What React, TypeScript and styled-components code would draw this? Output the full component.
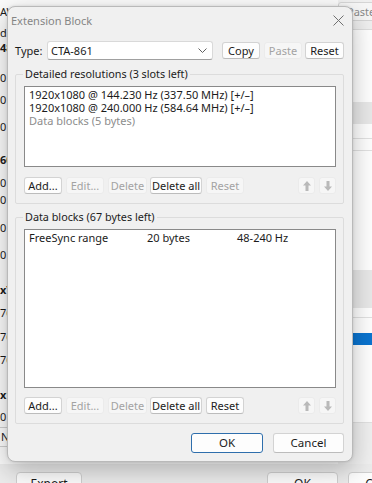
import React from 'react';
import styled, { createGlobalStyle } from 'styled-components';

const GlobalStyle = createGlobalStyle`
  html, body {
    margin: 0;
    padding: 0;
  }
  body {
    width: 372px;
    height: 483px;
    overflow: hidden;
    background: #f0f0f0;
    font-family: "Noto Sans", "Segoe UI", sans-serif;
    font-size: 11px;
    color: #1b1b1b;
  }
  * {
    box-sizing: border-box;
  }
`;

/* ---------- window behind the dialog ---------- */

const Desktop = styled.div`
  position: relative;
  width: 372px;
  height: 483px;
  display: grid;
  grid-template-rows: 464px 1fr;
  overflow: hidden;
`;

const BackMain = styled.div`
  display: grid;
  grid-template-columns: 338px 1fr;
`;

const BackList = styled.div`
  background: #fbfbfb;
  display: flex;
  flex-direction: column;
`;

const BackRow = styled.div<{ $gap: number; $bold?: boolean }>`
  margin-top: ${p => p.$gap}px;
  height: 14px;
  line-height: 14px;
  font-weight: ${p => (p.$bold ? 700 : 400)};
  white-space: nowrap;
`;

const BackSmallButton = styled.div`
  margin-top: 3px;
  width: 40px;
  height: 20px;
  line-height: 18px;
  border: 1px solid #cfcfcf;
  border-radius: 3px;
  background: #fdfdfd;
  margin-left: -20px;
  padding-left: 20px;
`;

const BackSide = styled.div`
  display: flex;
  flex-direction: column;
`;

const SideToolbar = styled.div`
  height: 30px;
  padding-top: 2px;
  background: #f0f0f0;
  border-bottom: 1px solid #dedede;
`;

const SideButton = styled.div`
  height: 19px;
  line-height: 17px;
  width: 60px;
  padding-left: 8px;
  border: 1px solid #d6d6d6;
  border-radius: 3px;
  background: #f7f7f7;
  color: #8a8a8a;
`;

const SideBand = styled.div<{ $h: number; $bg: string; $line?: boolean }>`
  height: ${p => p.$h}px;
  background: ${p => p.$bg};
  border-bottom: ${p => (p.$line ? '1px solid #e2e2e2' : 'none')};
`;

const BackBar = styled.div`
  background: #ececec;
  display: flex;
  align-items: flex-start;
  padding-top: 8px;
  padding-left: 16px;
`;

const BarButton = styled.div<{ $w: number; $ml: number }>`
  width: ${p => p.$w}px;
  margin-left: ${p => p.$ml}px;
  height: 24px;
  border: 1px solid #d0d0d0;
  border-radius: 4px;
  background: #fdfdfd;
  text-align: center;
  line-height: 22px;
  font-size: 12px;
`;

/* ---------- the dialog ---------- */

const Dialog = styled.div`
  position: absolute;
  left: 7px;
  top: 6px;
  width: 346px;
  height: 456px;
  background: #f0f0f0;
  border: 1px solid #b9b9b9;
  border-radius: 8px;
  box-shadow: 0 8px 26px rgba(0, 0, 0, 0.26), 0 0 3px rgba(0, 0, 0, 0.12);
  display: flex;
  flex-direction: column;
  overflow: hidden;
`;

const TitleBar = styled.div`
  height: 27px;
  display: flex;
  align-items: center;
  justify-content: space-between;
  padding-left: 3px;
`;

const Title = styled.span`
  font-size: 11px;
  color: #858585;
`;

const CloseButton = styled.div`
  width: 28px;
  height: 27px;
  display: flex;
  align-items: center;
  justify-content: center;
`;

const Body = styled.div`
  flex: 1;
  display: flex;
  flex-direction: column;
  padding: 7px 8px 8px 7px;
`;

const TypeRow = styled.div`
  height: 19px;
  display: flex;
  align-items: center;
`;

const TypeLabel = styled.span`
  width: 32px;
`;

const Select = styled.div`
  width: 166px;
  height: 19px;
  margin-right: 9px;
  display: flex;
  align-items: center;
  justify-content: space-between;
  padding: 0 5px 0 3px;
  background: #fff;
  border: 1px solid #d9d9d9;
  border-bottom-color: #a0a0a0;
  border-radius: 3px;
`;

const Btn = styled.button<{ $w: number; $h?: number; $default?: boolean }>`
  width: ${p => p.$w}px;
  height: ${p => p.$h ?? 17}px;
  padding: 0;
  font-family: inherit;
  font-size: ${p => (p.$h ? 11.5 : 11)}px;
  line-height: 1;
  color: #1b1b1b;
  background: #fdfdfd;
  border: 1px solid ${p => (p.$default ? '#2e6eac' : '#d3d3d3')};
  border-bottom-color: ${p => (p.$default ? '#2e6eac' : '#bcbcbc')};
  border-radius: 3px;
  display: inline-flex;
  align-items: center;
  justify-content: center;

  &:disabled {
    color: #a3a3a3;
    background: #f6f6f6;
    border-color: #ebebeb;
  }
`;

const ButtonGroup = styled.div<{ $gap: number }>`
  display: flex;
  gap: ${p => p.$gap}px;
`;

const Group = styled.fieldset<{ $mt: number }>`
  margin: ${p => p.$mt}px 0 0 0;
  padding: 5px 7px 9px 8px;
  border: 1px solid #dcdcdc;
  border-radius: 2px;
  min-width: 0;
`;

const Legend = styled.legend`
  margin-left: -1px;
  padding: 0 2px;
  line-height: 14px;
  height: 14px;
  font-size: 10.8px;
`;

const ListBox = styled.div<{ $h: number }>`
  height: ${p => p.$h}px;
  background: #fff;
  border: 1px solid #898989;
  padding: 1px 4px 0 4px;
`;

const ListLine = styled.div<{ $muted?: boolean }>`
  height: 13px;
  line-height: 13px;
  white-space: nowrap;
  color: ${p => (p.$muted ? '#8d8d8d' : '#1b1b1b')};
`;

const BlockLine = styled.div`
  height: 13px;
  line-height: 13px;
  display: grid;
  grid-template-columns: 118px 90px 1fr;
  white-space: nowrap;
`;

const ActionRow = styled.div<{ $mt: number }>`
  margin-top: ${p => p.$mt}px;
  display: flex;
  justify-content: space-between;
`;

const Footer = styled.div`
  margin-top: 9px;
  display: flex;
  justify-content: flex-end;
  gap: 10px;
`;

const Chevron = () => (
  <svg width="9" height="5" viewBox="0 0 9 5">
    <path d="M0.5 0.5 L4.5 4.5 L8.5 0.5" fill="none" stroke="#606060" strokeWidth="1" />
  </svg>
);

const CloseIcon = () => (
  <svg width="11" height="11" viewBox="0 0 11 11">
    <path d="M0.5 0.5 L10.5 10.5 M10.5 0.5 L0.5 10.5" stroke="#707070" strokeWidth="1" />
  </svg>
);

const Arrow: React.FC<{ down?: boolean }> = ({ down }) => (
  <svg width="8" height="10" viewBox="0 0 8 10" style={down ? { transform: 'rotate(180deg)' } : undefined}>
    <path d="M4 0 L8 4.5 H5.5 V10 H2.5 V4.5 H0 Z" fill="#b9b9b9" />
  </svg>
);

const Actions: React.FC<{ editable: boolean; mt: number }> = ({ editable, mt }) => (
  <ActionRow $mt={mt}>
    <ButtonGroup $gap={4}>
      <Btn $w={38}>Add...</Btn>
      <Btn $w={38} disabled>
        Edit...
      </Btn>
      <Btn $w={39} disabled>
        Delete
      </Btn>
      <Btn $w={52} style={{ marginLeft: -1 }}>
        Delete all
      </Btn>
      <Btn $w={38} disabled={!editable}>
        Reset
      </Btn>
    </ButtonGroup>
    <ButtonGroup $gap={4}>
      <Btn $w={17} disabled>
        <Arrow />
      </Btn>
      <Btn $w={17} disabled>
        <Arrow down />
      </Btn>
    </ButtonGroup>
  </ActionRow>
);

const backRows: { text: string; gap: number; bold?: boolean }[] = [
  { text: 'AW', gap: 5 },
  { text: 'd', gap: 7 },
  { text: '48', gap: 1, bold: true },
  { text: '0', gap: 16 },
  { text: '0', gap: 8 },
  { text: '0', gap: 13 },
  { text: '60', gap: 19, bold: true },
  { text: '0', gap: 9 },
  { text: '0', gap: 3 },
  { text: '0', gap: 14 },
  { text: '0', gap: 13 },
  { text: 'x7', gap: 21, bold: true },
  { text: '76', gap: 9 },
  { text: '76', gap: 10 },
  { text: '76', gap: 9 },
  { text: 'x1', gap: 21, bold: true },
  { text: '0', gap: 8 },
];

const sideBands: { h: number; bg: string; line?: boolean }[] = [
  { h: 72, bg: '#ffffff' },
  { h: 22, bg: '#e9e9e9' },
  { h: 15, bg: '#ffffff', line: true },
  { h: 12, bg: '#ffffff', line: true },
  { h: 119, bg: '#ffffff' },
  { h: 38, bg: '#e9e9e9' },
  { h: 10, bg: '#ffffff', line: true },
  { h: 15, bg: '#ffffff' },
  { h: 12, bg: '#0a74d0' },
  { h: 78, bg: '#ffffff', line: true },
  { h: 40, bg: '#f0f0f0' },
];

const App: React.FC = () => {
  return (
    <>
      <GlobalStyle />
      <Desktop>
        <BackMain>
          <BackList>
            {backRows.map((r, i) => (
              <BackRow key={i} $gap={r.gap} $bold={r.bold}>
                {r.text}
              </BackRow>
            ))}
            <BackSmallButton>N</BackSmallButton>
          </BackList>
          <BackSide>
            <SideToolbar>
              <SideButton>Paste</SideButton>
            </SideToolbar>
            {sideBands.map((b, i) => (
              <SideBand key={i} $h={b.h} $bg={b.bg} $line={b.line} />
            ))}
          </BackSide>
        </BackMain>
        <BackBar>
          <BarButton $w={66} $ml={0}>
            Export
          </BarButton>
          <BarButton $w={71} $ml={185}>
            OK
          </BarButton>
          <BarButton $w={72} $ml={10}>
            Cancel
          </BarButton>
        </BackBar>

        <Dialog>
          <TitleBar>
            <Title>Extension Block</Title>
            <CloseButton>
              <CloseIcon />
            </CloseButton>
          </TitleBar>
          <Body>
            <TypeRow>
              <TypeLabel>Type:</TypeLabel>
              <Select>
                <span>CTA-861</span>
                <Chevron />
              </Select>
              <ButtonGroup $gap={4}>
                <Btn $w={38}>Copy</Btn>
                <Btn $w={38} disabled>
                  Paste
                </Btn>
                <Btn $w={39} style={{ marginLeft: -1 }}>
                  Reset
                </Btn>
              </ButtonGroup>
            </TypeRow>

            <Group $mt={7}>
              <Legend>Detailed resolutions (3 slots left)</Legend>
              <ListBox $h={81}>
                <ListLine>1920x1080 @ 144.230 Hz (337.50 MHz) [+/–]</ListLine>
                <ListLine>1920x1080 @ 240.000 Hz (584.64 MHz) [+/–]</ListLine>
                <ListLine $muted>Data blocks (5 bytes)</ListLine>
              </ListBox>
              <Actions editable={false} mt={10} />
            </Group>

            <Group $mt={6}>
              <Legend>Data blocks (67 bytes left)</Legend>
              <ListBox $h={159}>
                <BlockLine>
                  <span>FreeSync range</span>
                  <span>20 bytes</span>
                  <span>48-240 Hz</span>
                </BlockLine>
              </ListBox>
              <Actions editable mt={9} />
            </Group>

            <Footer>
              <Btn $w={72} $h={20} $default>
                OK
              </Btn>
              <Btn $w={71} $h={20}>
                Cancel
              </Btn>
            </Footer>
          </Body>
        </Dialog>
      </Desktop>
    </>
  );
};

export default App;
